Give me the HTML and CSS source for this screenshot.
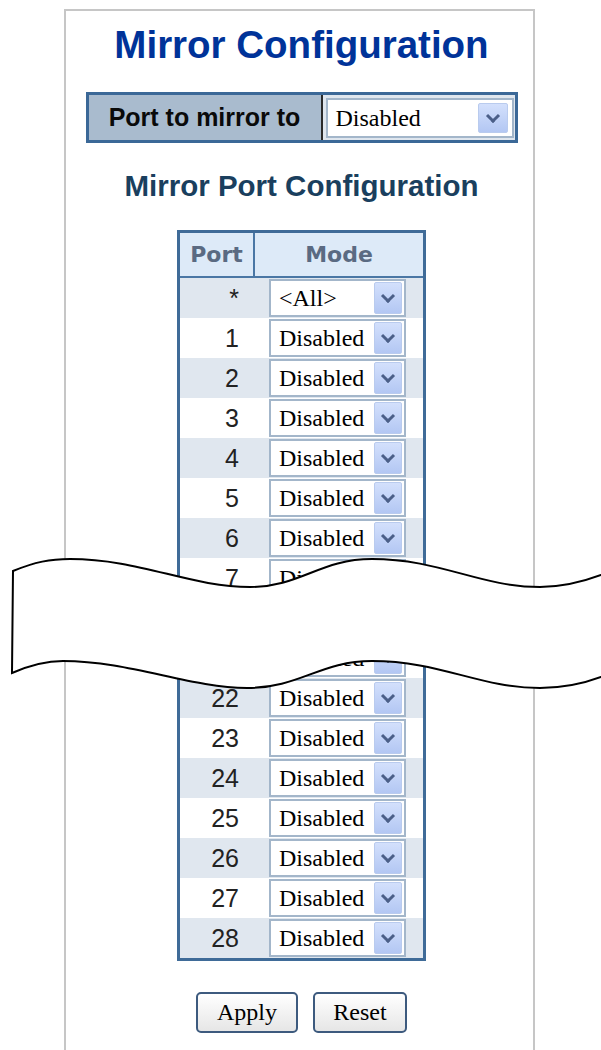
FILE: index.html
```html
<!DOCTYPE html>
<html lang="en">
<head>
    <meta charset="UTF-8">
    <title>Mirror Configuration</title>
    <link rel="stylesheet" href="styles.css">
</head>
<body>

<div class="frame">
    <!-- Page heading -->
    <h1 class="title">Mirror Configuration</h1>

    <!-- Destination port -->
    <div class="mirror-to">
        <div class="mirror-label">Port to mirror to</div>
        <div class="mirror-cell">
            <div class="select select-wide"><span>Disabled</span><span class="select-btn"></span></div>
        </div>
    </div>

    <h2 class="subtitle">Mirror Port Configuration</h2>

    <!-- Per port mode -->
    <div class="port-table">
        <div class="port-head">
            <div class="head-port">Port</div>
            <div class="head-mode">Mode</div>
        </div>
        <div class="port-row alt"><div class="port-num">*</div><div class="select"><span>&lt;All&gt;</span><span class="select-btn"></span></div></div>
        <div class="port-row"><div class="port-num">1</div><div class="select"><span>Disabled</span><span class="select-btn"></span></div></div>
        <div class="port-row alt"><div class="port-num">2</div><div class="select"><span>Disabled</span><span class="select-btn"></span></div></div>
        <div class="port-row"><div class="port-num">3</div><div class="select"><span>Disabled</span><span class="select-btn"></span></div></div>
        <div class="port-row alt"><div class="port-num">4</div><div class="select"><span>Disabled</span><span class="select-btn"></span></div></div>
        <div class="port-row"><div class="port-num">5</div><div class="select"><span>Disabled</span><span class="select-btn"></span></div></div>
        <div class="port-row alt"><div class="port-num">6</div><div class="select"><span>Disabled</span><span class="select-btn"></span></div></div>
        <div class="port-row"><div class="port-num">7</div><div class="select"><span>Disabled</span><span class="select-btn"></span></div></div>
        <div class="port-row alt"><div class="port-num">20</div><div class="select"><span>Disabled</span><span class="select-btn"></span></div></div>
        <div class="port-row"><div class="port-num">21</div><div class="select"><span>Disabled</span><span class="select-btn"></span></div></div>
        <div class="port-row alt"><div class="port-num">22</div><div class="select"><span>Disabled</span><span class="select-btn"></span></div></div>
        <div class="port-row"><div class="port-num">23</div><div class="select"><span>Disabled</span><span class="select-btn"></span></div></div>
        <div class="port-row alt"><div class="port-num">24</div><div class="select"><span>Disabled</span><span class="select-btn"></span></div></div>
        <div class="port-row"><div class="port-num">25</div><div class="select"><span>Disabled</span><span class="select-btn"></span></div></div>
        <div class="port-row alt"><div class="port-num">26</div><div class="select"><span>Disabled</span><span class="select-btn"></span></div></div>
        <div class="port-row"><div class="port-num">27</div><div class="select"><span>Disabled</span><span class="select-btn"></span></div></div>
        <div class="port-row alt"><div class="port-num">28</div><div class="select"><span>Disabled</span><span class="select-btn"></span></div></div>
    </div>

    <!-- Buttons -->
    <div class="actions">
        <button class="btn btn-apply">Apply</button>
        <button class="btn btn-reset">Reset</button>
    </div>
</div>

<!-- Cut marker drawn over the skipped rows -->
<svg class="cut" width="601" height="160" viewBox="0 540 601 160">
    <path d="M13,571 C35,562 50,559 70,559 C140,559 190,587 250,587 C300,587 320,559 372,559 C440,559 480,587 540,587 C565,587 585,581 601,575 L612,571 L612,679 L601,677 C585,683 565,688 540,688 C480,688 440,661 372,661 C320,661 300,688 247,688 C190,688 130,661 63,661 C45,661 28,666 12,673 Z"
          fill="#fff" stroke="#000" stroke-width="2"/>
</svg>

</body>
</html>
```

FILE: styles.css
```css
body {
    margin: 0;
    font-family: "Liberation Sans", Arial, sans-serif;
    background-color: #fff;
    position: relative;
    overflow: hidden;
}
.frame {
    width: 471px;
    min-height: 1041px;
    margin: 9px 0 0 64px;
    padding: 12px 0 0 4px;
    box-sizing: border-box;
    border: 2px solid #c6c6c6;
    border-bottom: none;
    display: flex;
    flex-direction: column;
    align-items: center;
}
.title {
    margin: 0;
    font-size: 38.5px;
    line-height: 44px;
    font-weight: bold;
    color: #003399;
}
.mirror-to {
    margin-top: 25px;
    width: 432px;
    height: 51px;
    box-sizing: border-box;
    display: flex;
    border: 3px solid #3b6897;
    background-color: #a9bbce;
}
.mirror-label {
    width: 232px;
    display: flex;
    align-items: center;
    justify-content: center;
    font-size: 25px;
    font-weight: bold;
    color: #0a0a0a;
}
.mirror-cell {
    flex: 1;
    border-left: 2px solid #2a2a2a;
    padding: 3px 1px 2px 3px;
    background-color: #dfe6ee;
}
.subtitle {
    margin: 26px 0 0;
    font-size: 29.5px;
    line-height: 34px;
    font-weight: bold;
    color: #1a3f5e;
}
.port-table {
    margin-top: 27px;
    width: 249px;
    box-sizing: border-box;
    border: 3px solid #3f6b98;
}
.port-head {
    display: flex;
    height: 45px;
    box-sizing: border-box;
    background-color: #ddeaf8;
    border-bottom: 2px solid #4a77a5;
    font-family: "DejaVu Sans", Verdana, sans-serif;
    font-size: 22px;
    font-weight: bold;
    line-height: 43px;
    color: #5a6a82;
}
.head-port {
    width: 73px;
    border-right: 2px solid #4a77a5;
    text-align: center;
}
.head-mode {
    flex: 1;
    text-align: center;
}
.port-row {
    display: flex;
    align-items: center;
    height: 40px;
    background-color: #fff;
}
.port-row.alt {
    background-color: #e0e7ef;
}
.port-num {
    width: 89px;
    padding-right: 30px;
    box-sizing: border-box;
    text-align: right;
    font-size: 25px;
    color: #222;
}
.select {
    display: flex;
    align-items: center;
    box-sizing: border-box;
    border: 2px solid #a3b6ca;
    background-color: #fff;
    font-family: "Liberation Serif", "Times New Roman", serif;
    font-size: 24px;
    color: #000;
    width: 137px;
    height: 38px;
    padding-left: 8px;
}
.select-wide {
    width: 188px;
    height: 40px;
}
.select-btn {
    margin-left: auto;
    margin-right: 2px;
    width: 28px;
    height: 32px;
    box-sizing: border-box;
    border: 1px solid #b9cbee;
    border-radius: 2px;
    background: linear-gradient(#d3e0fc, #b3c7f3);
    display: flex;
    align-items: center;
    justify-content: center;
}
.select-wide .select-btn {
    width: 30px;
    height: 30px;
    margin-right: 4px;
}
.select-btn::after {
    content: "";
    width: 7px;
    height: 7px;
    border-right: 3px solid #4b5f88;
    border-bottom: 3px solid #4b5f88;
    transform: translateY(-2px) rotate(45deg);
}
.actions {
    margin-top: 31px;
    display: flex;
    gap: 15px;
}
.btn {
    height: 41px;
    border: 2px solid #3d5a7e;
    border-radius: 5px;
    background: linear-gradient(#ffffff, #e6e6e6);
    font-family: "Liberation Serif", "Times New Roman", serif;
    font-size: 24px;
    color: #000;
    padding: 0;
}
.btn-apply {
    width: 102px;
}
.btn-reset {
    width: 94px;
}
.cut {
    position: absolute;
    left: 0;
    top: 540px;
}
```
